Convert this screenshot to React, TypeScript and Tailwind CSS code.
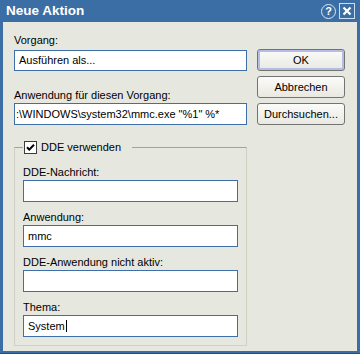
import type { ReactNode } from "react";

function Field({ label, value, className = "", h = "h-[22px]", cursor = false }: { label: string; value?: string; className?: string; h?: string; cursor?: boolean }) {
  return (
    <div className={className}>
      <div className="h-[13px] leading-[13px] whitespace-nowrap">{label}</div>
      <div className={`mt-[1px] ${h} bg-white border border-[#3e6fa9] px-[4px] flex items-center overflow-hidden whitespace-nowrap`}>
        {value}
        {cursor && <span className="ml-[1px] w-[1px] h-[12px] bg-black" />}
      </div>
    </div>
  );
}

function Btn({ children, def = false }: { children: ReactNode; def?: boolean }) {
  return (
    <div
      className={`h-[22px] rounded-[3px] border border-[#737373] bg-gradient-to-b from-[#fbfbf9] to-[#e9e8e2] flex items-center justify-center ${
        def ? "shadow-[inset_0_0_0_2px_#b5bde4]" : ""
      }`}
    >
      {children}
    </div>
  );
}

export default function App() {
  return (
    <div className="w-[360px] h-[354px] flex flex-col bg-[#3a6ea5] border-b border-[#234c7c] font-['Liberation_Sans',Arial,sans-serif] text-[11px] text-black">
      <div className="h-[22px] shrink-0 flex items-center pl-[6px] pr-[5px]">
        <span className="flex-1 text-white font-bold text-[13.5px] leading-none">Neue Aktion</span>
        <div className="w-[15px] h-[15px] rounded-full border border-[#dfe8f3] flex items-center justify-center text-white font-bold text-[11px] leading-none">
          ?
        </div>
        <div className="ml-[3px] w-[16px] h-[16px] border border-[#cfdcec] flex items-center justify-center">
          <svg width="10" height="10" viewBox="0 0 10 10">
            <path d="M1.5 1.5 L8.5 8.5 M8.5 1.5 L1.5 8.5" stroke="white" strokeWidth="2.2" />
          </svg>
        </div>
      </div>

      <div className="flex-1 mx-[3px] mb-[2px] bg-[#e6e8e0] flex pl-[11px]">
        <div className="w-[233px] pt-[12px]">
          <div className="h-[13px] leading-[13px]">Vorgang:</div>
          <div className="mt-[3px] h-[21px] bg-white border border-[#3e6fa9] px-[4px] flex items-center">Ausführen als...</div>
          <div className="mt-[18px] h-[13px] leading-[13px]">Anwendung für diesen Vorgang:</div>
          <div className="mt-[1px] h-[22px] bg-white border border-[#3e6fa9] pl-[1px] flex items-center whitespace-nowrap overflow-hidden">
            :\WINDOWS\system32\mmc.exe "%1" %*
          </div>

          <fieldset className="mt-[16px] border border-[#d0d0c2] border-t-[#a3a396] pl-[8px] pr-[8px] pb-[8px]">
            <legend className="pl-[1px] pr-[11px]">
              <span className="flex items-center h-[13px]">
                <span className="w-[13px] h-[13px] bg-white border border-[#3b3b3b] flex items-center justify-center">
                  <svg width="9" height="9" viewBox="0 0 9 9">
                    <path d="M1 4.2 L3.3 6.6 L8 1.8" stroke="black" strokeWidth="2" fill="none" />
                  </svg>
                </span>
                <span className="ml-[4px] leading-[13px]">DDE verwenden</span>
              </span>
            </legend>
            <Field label="DDE-Nachricht:" className="mt-[12px]" />
            <Field label="Anwendung:" value="mmc" className="mt-[9px]" />
            <Field label="DDE-Anwendung nicht aktiv:" className="mt-[9px]" />
            <Field label="Thema:" value="System" cursor className="mt-[9px]" />
          </fieldset>
        </div>

        <div className="ml-[10px] w-[88px] pt-[27px] flex flex-col gap-[5px]">
          <Btn def>OK</Btn>
          <Btn>Abbrechen</Btn>
          <Btn>Durchsuchen...</Btn>
        </div>
      </div>
    </div>
  );
}
